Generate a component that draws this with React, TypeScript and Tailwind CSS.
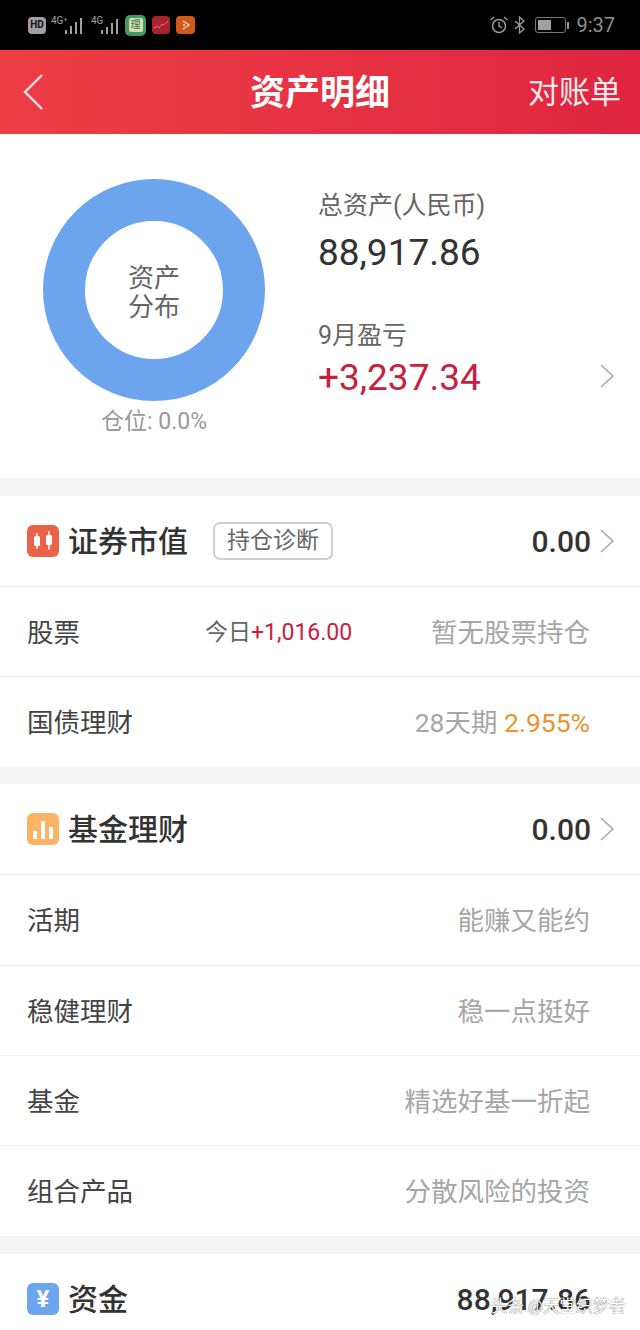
const FONT = "font-['Roboto','Noto_Sans_CJK_SC',sans-serif]";

function Chevron({ className = '' }: { className?: string }) {
  return (
    <svg className={className} width="16" height="26" viewBox="0 0 16 26" fill="none" stroke="#a9a9a9" strokeWidth="1.6">
      <path d="M2 2l12 11L2 24" />
    </svg>
  );
}

function SignalBars({ small }: { small?: boolean }) {
  const bars = small ? [4, 7, 11, 15] : [4, 8, 12, 16];
  return (
    <div className="flex items-end gap-[3px] h-[16px]">
      {bars.map((h, i) => (
        <div key={i} className="w-[2px] bg-[#a0a0a0]" style={{ height: h }} />
      ))}
    </div>
  );
}

function StatusBar() {
  return (
    <div className="h-[50px] bg-black flex items-center justify-between pl-[28px] pr-[25px]">
      <div className="flex items-center">
        <div className="w-[18px] h-[17px] rounded-[4px] bg-[#a0a0a0] flex items-center justify-center text-[10px] leading-none font-bold text-[#111]">HD</div>
        <div className="flex items-end ml-[5px] w-[33px] h-[18px]">
          <span className="text-[10px] leading-none text-[#a0a0a0] self-start">4G⁺</span>
          <div className="-ml-[2px]"><SignalBars /></div>
        </div>
        <div className="flex items-end ml-[7px] w-[29px] h-[18px]">
          <span className="text-[10px] leading-none text-[#a0a0a0] self-start">4G</span>
          <div className="-ml-[2px]"><SignalBars small /></div>
        </div>
        <div className="ml-[5px] w-[21px] h-[21px] rounded-[5px] bg-[#3f9a63] flex items-center justify-center">
          <div className="w-[14px] h-[14px] bg-[#d9dcae] rounded-[2px] text-[10px] leading-[14px] text-center text-[#2f7a4c]">理</div>
        </div>
        <div className="ml-[6px] w-[18px] h-[18px] rounded-[4px] bg-[#a8222f] flex items-center justify-center">
          <svg width="16" height="12" viewBox="0 0 16 12" fill="none" stroke="#e9a0a0" strokeWidth="1">
            <path d="M1 9l3-2 2 2 3-4 2 1 4-4" strokeDasharray="2 1" />
          </svg>
        </div>
        <div className="ml-[6px] w-[19px] h-[18px] rounded-[4px] bg-[#d2581c] flex items-center justify-center">
          <svg width="10" height="10" viewBox="0 0 10 10" fill="none" stroke="#f5d2b5" strokeWidth="1.4">
            <path d="M2 1l6 4-6 4M2 5h2" />
          </svg>
        </div>
      </div>
      <div className="flex items-center text-[#8f8f8f]">
        <svg width="20" height="20" viewBox="0 0 20 20" fill="none" stroke="#999" strokeWidth="1.5">
          <circle cx="10" cy="11" r="6.5" />
          <path d="M10 7v4l3 2M1.5 5L5 2M18.5 5L15 2" />
        </svg>
        <svg className="ml-[5px]" width="12" height="18" viewBox="0 0 12 18" fill="none" stroke="#999" strokeWidth="1.3">
          <path d="M1 5l9 8-4.5 4V1L10 5l-9 8" />
        </svg>
        <div className="ml-[9px] w-[31px] h-[16px] rounded-[3px] border border-[#777] p-[2px]">
          <div className="w-[13px] h-full bg-[#a0a0a0]" />
        </div>
        <div className="ml-[1px] w-[2px] h-[7px] bg-[#999]" />
        <span className="ml-[7px] text-[20px] leading-none">9:37</span>
      </div>
    </div>
  );
}

function Header() {
  return (
    <div className="h-[84px] bg-gradient-to-r from-[#ee3d46] to-[#df2540] flex items-center justify-between pl-[22px] pr-[19px] relative">
      <svg width="22" height="38" viewBox="0 0 22 38" fill="none" stroke="#f6e3e3" strokeWidth="2.4">
        <path d="M20 2L3 19l17 17" />
      </svg>
      <span className="absolute left-0 right-0 top-[26px] text-center text-[35px] leading-none font-bold text-white">资产明细</span>
      <span className="text-[31px] leading-none text-[#fbeaea]">对账单</span>
    </div>
  );
}

function Summary() {
  return (
    <div className="h-[344px] bg-white flex items-start pt-[45px] pl-[43px]">
      <div className="flex flex-col items-center w-[222px]">
        <div className="w-[222px] h-[222px] rounded-full border-[42px] border-[#6ca5ee] flex items-center justify-center">
          <span className="pt-[6px] text-[26px] leading-[29px] text-[#666] text-center">资产<br />分布</span>
        </div>
        <span className="mt-[8px] text-[23px] leading-[26px] text-[#999]">仓位: 0.0%</span>
      </div>
      <div className="ml-[53px] flex-1 pr-[25px] mt-[12px]">
        <div className="text-[25px] leading-[30px] text-[#666]">总资产(人民币)</div>
        <div className="mt-[10px] text-[37px] leading-[44px] text-[#333]">88,917.86</div>
        <div className="mt-[46px] text-[25px] leading-[30px] text-[#666]">9月盈亏</div>
        <div className="mt-[5px] flex items-center justify-between">
          <span className="text-[37px] leading-[44px] text-[#c8213f]">+3,237.34</span>
          <Chevron className="-mt-[4px]" />
        </div>
      </div>
    </div>
  );
}

function Gap() {
  return <div className="h-[17.75px] bg-[#f5f5f5]" />;
}

function SectionHead({ icon, title, value, badge, noArrow }: { icon: React.ReactNode; title: string; value: string; badge?: boolean; noArrow?: boolean }) {
  return (
    <div className="h-[90px] flex items-center pl-[27px] pr-[25px]">
      {icon}
      <span className="ml-[9px] mt-[2px] text-[30px] leading-none font-medium text-[#333]">{title}</span>
      {badge && (
        <span className="ml-[25px] w-[120px] h-[38px] rounded-[7px] border-2 border-[#cfcfcf] flex items-center justify-center text-[23px] leading-none text-[#666]">持仓诊断</span>
      )}
      <span className="ml-auto mt-[2px] text-[30px] leading-none font-medium text-[#333]">{value}</span>
      <Chevron className={noArrow ? 'ml-[8px] invisible' : 'ml-[8px]'} />
    </div>
  );
}

function Row({ label, children }: { label: string; children: React.ReactNode }) {
  return (
    <div className="h-[90.4px] border-t border-[#f1f1f1] flex items-center justify-between pl-[27px] pr-[50px] pt-[3px]">
      <span className="text-[26.5px] leading-none text-[#444]">{label}</span>
      {children}
    </div>
  );
}

const hint = 'text-[26.5px] leading-none text-[#a6a6a6]';

export default function App() {
  return (
    <div className={`relative w-[640px] h-[1330px] overflow-hidden bg-white ${FONT}`}>
      <StatusBar />
      <Header />
      <Summary />
      <Gap />
      <SectionHead
        title="证券市值"
        value="0.00"
        badge
        icon={
          <div className="w-[32px] h-[32px] rounded-[6px] bg-[#ea6248] flex items-center justify-center">
            <svg width="24" height="22" viewBox="0 0 24 22" fill="#fff">
              <rect x="3" y="6" width="6" height="10" rx="1.5" />
              <rect x="5.3" y="3" width="1.4" height="16" />
              <rect x="15" y="5" width="6" height="10" rx="1.5" />
              <rect x="17.3" y="1" width="1.4" height="19" />
            </svg>
          </div>
        }
      />
      <Row label="股票">
        <span className="ml-[125px] mr-auto text-[23px] leading-none text-[#666]">今日<span className="text-[#c8213f]">+1,016.00</span></span>
        <span className={hint}>暂无股票持仓</span>
      </Row>
      <Row label="国债理财">
        <span className="text-[26.5px] leading-none text-[#a6a6a6]">28天期 <span className="text-[#e8942a]">2.955%</span></span>
      </Row>
      <Gap />
      <SectionHead
        title="基金理财"
        value="0.00"
        icon={
          <div className="w-[32px] h-[32px] rounded-[6px] bg-[#fbb368] flex items-end justify-center gap-[4px] pb-[6px]">
            <div className="w-[4px] h-[8px] rounded-[1px] bg-white" />
            <div className="w-[4px] h-[18px] rounded-[1px] bg-white" />
            <div className="w-[4px] h-[12px] rounded-[1px] bg-white" />
          </div>
        }
      />
      <Row label="活期"><span className={hint}>能赚又能约</span></Row>
      <Row label="稳健理财"><span className={hint}>稳一点挺好</span></Row>
      <Row label="基金"><span className={hint}>精选好基一折起</span></Row>
      <Row label="组合产品"><span className={hint}>分散风险的投资</span></Row>
      <Gap />
      <SectionHead
        title="资金"
        value="88,917.86"
        noArrow
        icon={
          <div className="w-[32px] h-[32px] rounded-[6px] bg-[#6ca5ee] flex items-center justify-center text-[24px] leading-none font-bold text-white">¥</div>
        }
      />
      <span className="absolute left-[491px] top-[1296px] whitespace-nowrap text-[16.5px] leading-[22px] text-white [text-shadow:0_0_1px_#222]">头条 @天堂织梦者</span>
    </div>
  );
}
